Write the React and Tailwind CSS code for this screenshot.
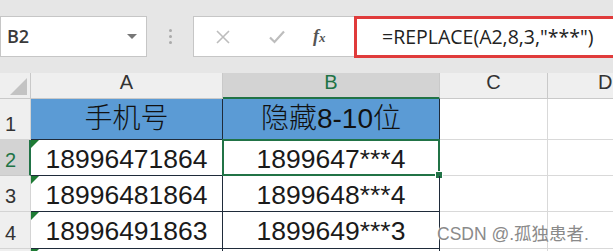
import React from "react";

const F = { fontFamily: '"Liberation Sans", Arial, "Noto Sans CJK SC", sans-serif' };
const CJK = { fontFamily: '"Liberation Sans", "Noto Sans CJK SC", sans-serif' };

function Tri() {
  return <span className="absolute left-0 top-0 w-0 h-0 border-t-[8px] border-r-[8px] border-t-[#1e7b34] border-r-transparent" />;
}

export default function App() {
  const rows = [
    ["18996471864", "1899647***4"],
    ["18996481864", "1899648***4"],
    ["18996491863", "1899649***3"],
  ];
  return (
    <div className="relative w-[613px] h-[251px] overflow-hidden bg-white" style={F}>
      {/* formula bar */}
      <div className="h-[73px] bg-[#e6e6e6] flex items-start pt-[16px]">
        <div className="w-[147px] h-[41px] bg-white border border-[#c6c6c6] flex items-center justify-between pl-[6px] pr-[9px]">
          <span className="text-[18px] font-semibold text-[#3a3a3a]" style={{ fontFamily: '"Open Sans", sans-serif' }}>B2</span>
          <span className="w-0 h-0 border-l-[5px] border-r-[5px] border-t-[5px] border-l-transparent border-r-transparent border-t-[#777]" />
        </div>
        <div className="w-[46px] h-[41px] flex flex-col items-center justify-center gap-[3px]">
          <span className="w-[3px] h-[3px] rounded-full bg-[#aaa]" />
          <span className="w-[3px] h-[3px] rounded-full bg-[#aaa]" />
          <span className="w-[3px] h-[3px] rounded-full bg-[#aaa]" />
        </div>
        <div className="w-[161px] h-[41px] bg-white border border-r-0 border-[#c6c6c6] flex items-center">
          <svg width="16" height="16" viewBox="0 0 16 16" className="ml-[21px]">
            <path d="M2 2 L14 14 M14 2 L2 14" stroke="#bdbdbd" strokeWidth="1.6" fill="none" />
          </svg>
          <svg width="18" height="16" viewBox="0 0 18 16" className="ml-[37px]">
            <path d="M2 8.5 L6.5 13 L16 2.5" stroke="#bdbdbd" strokeWidth="2.2" fill="none" />
          </svg>
          <span className="ml-[27px] text-[18px] italic text-[#555] font-bold" style={{ fontFamily: '"Liberation Serif", serif' }}>f<span className="text-[13px]">x</span></span>
        </div>
        <div className="flex-1 h-[42px] bg-white border-[3px] border-r-0 border-[#e03b3b] flex items-center pl-[25px]">
          <span className="text-[19.5px] text-[#222]" style={{ fontFamily: '"Open Sans", "Liberation Sans", sans-serif' }}>=REPLACE(A2,8,3,"***")</span>
        </div>
      </div>

      {/* grid */}
      <div className="grid grid-cols-[31px_192px_217px_108px_1fr] grid-rows-[26px_41px_36px_36px_37px_20px]">
        {/* header row */}
        <div className="relative bg-[#efefef] border-r border-b border-[#c9c9c9]">
          <svg className="absolute right-[3px] bottom-[3px]" width="17" height="17" viewBox="0 0 17 17"><path d="M17 0 L17 17 L0 17 Z" fill="#c3c3c3" /></svg>
        </div>
        <div className="bg-[#efefef] border-r border-b border-[#c9c9c9] flex items-end justify-center pb-[1px] text-[20px] text-[#333]">A</div>
        <div className="bg-[#d3d3d3] border-r border-[#c9c9c9] border-b-2 border-b-[#217346] flex items-end justify-center text-[20px] text-[#217346]">B</div>
        <div className="bg-[#efefef] border-r border-b border-[#c9c9c9] flex items-end justify-center pb-[1px] text-[20px] text-[#333]">C</div>
        <div className="bg-[#efefef] border-b border-[#c9c9c9] flex items-end pl-[50px] pb-[1px] text-[20px] text-[#333]">D</div>

        {/* row 1 */}
        <div className="bg-[#efefef] border-r border-b border-[#d4d4d4] flex items-end pl-[5px] text-[20px] text-[#333]">1</div>
        <div className="bg-[#5b9bd5] border-r border-b border-[#1f2b3a] flex items-center justify-center text-[28px] font-light text-[#111]" style={CJK}>手机号</div>
        <div className="bg-[#5b9bd5] border-r border-b border-[#1f2b3a] flex items-center justify-center text-[28px] font-light text-[#111]" style={CJK}>隐藏8-10位</div>
        <div className="border-r border-b border-[#d9d9d9]" />
        <div className="border-b border-[#d9d9d9]" />

        {rows.map((r, i) => (
          <React.Fragment key={i}>
            <div className={`flex items-end pl-[5px] text-[20px] border-b ${i === 0 ? "bg-[#d3d3d3] text-[#217346] border-r-2 border-r-[#217346] border-b-[#c9c9c9]" : "bg-[#efefef] text-[#333] border-r border-[#d4d4d4]"}`}>{i + 2}</div>
            <div className="relative border-r border-b border-[#1f2b3a] flex items-center justify-center text-[26.5px] text-[#1a1a1a] pt-[4px]">
              <Tri />
              {r[0]}
            </div>
            <div className={`relative flex items-center justify-center text-[26.5px] text-[#1a1a1a] pt-[4px] ${i === 0 ? "border-2 border-[#217346] -ml-[1px] -mt-[1px]" : "border-r border-b border-[#1f2b3a]"}`}>
              {r[1]}
              {i === 0 && <span className="absolute -right-[5px] -bottom-[5px] w-[8px] h-[8px] bg-[#217346] border border-white" />}
            </div>
            <div className="border-r border-b border-[#d9d9d9]" />
            <div className="border-b border-[#d9d9d9]" />
          </React.Fragment>
        ))}

        {/* row 5 */}
        <div className="bg-[#efefef] border-r border-[#d4d4d4]" />
        <div className="relative border-r border-[#1f2b3a]"><Tri /></div>
        <div className="border-r border-[#1f2b3a]" />
        <div className="border-r border-[#d9d9d9]" />
        <div />
      </div>

      {/* watermark */}
      <div className="absolute left-[437px] top-[221px] text-[17.5px] text-[#8a8a8a]" style={{ fontFamily: '"Liberation Sans", "Noto Sans CJK SC", sans-serif', textShadow: "0 0 2px #fff, 0 0 2px #fff" }}>
        CSDN @.孤独患者.
      </div>
    </div>
  );
}
